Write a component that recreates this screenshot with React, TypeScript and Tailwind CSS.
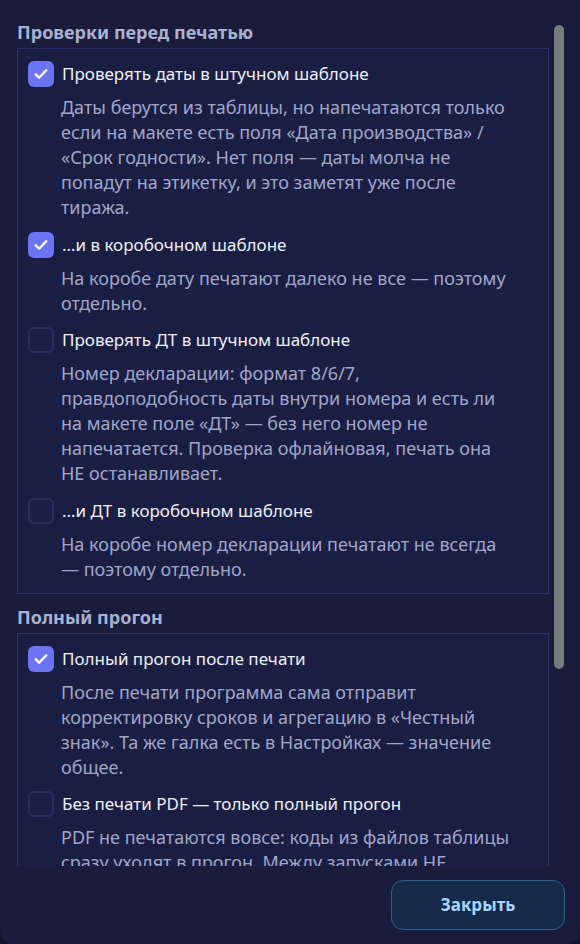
import React from "react";

type Item = { checked: boolean; label: string; lines: string[] };

const sections: { title: string; items: Item[] }[] = [
  {
    title: "Проверки перед печатью",
    items: [
      {
        checked: true,
        label: "Проверять даты в штучном шаблоне",
        lines: [
          "Даты берутся из таблицы, но напечатаются только",
          "если на макете есть поля «Дата производства» /",
          "«Срок годности». Нет поля — даты молча не",
          "попадут на этикетку, и это заметят уже после",
          "тиража.",
        ],
      },
      {
        checked: true,
        label: "…и в коробочном шаблоне",
        lines: ["На коробе дату печатают далеко не все — поэтому", "отдельно."],
      },
      {
        checked: false,
        label: "Проверять ДТ в штучном шаблоне",
        lines: [
          "Номер декларации: формат 8/6/7,",
          "правдоподобность даты внутри номера и есть ли",
          "на макете поле «ДТ» — без него номер не",
          "напечатается. Проверка офлайновая, печать она",
          "НЕ останавливает.",
        ],
      },
      {
        checked: false,
        label: "…и ДТ в коробочном шаблоне",
        lines: ["На коробе номер декларации печатают не всегда", "— поэтому отдельно."],
      },
    ],
  },
  {
    title: "Полный прогон",
    items: [
      {
        checked: true,
        label: "Полный прогон после печати",
        lines: [
          "После печати программа сама отправит",
          "корректировку сроков и агрегацию в «Честный",
          "знак». Та же галка есть в Настройках — значение",
          "общее.",
        ],
      },
      {
        checked: false,
        label: "Без печати PDF — только полный прогон",
        lines: [
          "PDF не печатаются вовсе: коды из файлов таблицы",
          "сразу уходят в прогон. Между запусками НЕ",
          "закрывайте программу.",
        ],
      },
    ],
  },
];

function Box({ checked }: { checked: boolean }) {
  if (checked) {
    return (
      <div className="w-[26px] h-[26px] shrink-0 rounded-[6px] bg-[#6d74f3] flex items-center justify-center">
        <svg width="18" height="18" viewBox="0 0 24 24" fill="none" stroke="#ffffff" strokeWidth="3.2" strokeLinecap="round" strokeLinejoin="round">
          <path d="M5 12.5l4.5 4.5L19 7" />
        </svg>
      </div>
    );
  }
  return <div className="w-[26px] h-[26px] shrink-0 rounded-[6px] border-2 border-[#2a2f60] bg-[#1c1f47]" />;
}

export default function App() {
  return (
    <div className="w-[580px] h-[944px] bg-[#13152e]" style={{ fontFamily: '"Noto Sans", "Open Sans", sans-serif' }}>
      <div className="w-full h-full bg-[#1a1c3c] rounded-b-[14px] flex flex-col">
        <div className="h-[866px] overflow-hidden flex">
          <div className="flex-1 pl-[17px] pt-[20px] flex flex-col">
            {sections.map((s, si) => (
              <div key={si} className={si > 0 ? "mt-[11px]" : ""}>
                <div className="text-[18px] leading-[24px] font-bold text-[#a9b1d0] whitespace-nowrap">{s.title}</div>
                <div className="mt-[4px] border border-[#2b3066] bg-[#1b1e43] pt-[12px] pb-[11px] pl-[10px] pr-[10px] flex flex-col gap-[11.5px]">
                  {s.items.map((it, ii) => (
                    <div key={ii} className="flex flex-col">
                      <div className="flex items-center gap-[8px]">
                        <Box checked={it.checked} />
                        <span className="text-[17px] leading-[24px] text-[#eef0f8] whitespace-nowrap">{it.label}</span>
                      </div>
                      <div className="mt-[8px] pl-[33px] text-[18px] leading-[25px] text-[#a0a6c9]">
                        {it.lines.map((l, li) => (
                          <div key={li} className="whitespace-nowrap">{l}</div>
                        ))}
                      </div>
                    </div>
                  ))}
                </div>
              </div>
            ))}
          </div>
          <div className="w-[10px] ml-[5px] mr-[16px] pt-[25px] shrink-0">
            <div className="h-[644px] w-full rounded-[5px] bg-[#7a7a7c]" />
          </div>
        </div>
        <div className="flex-1 flex justify-end items-start pt-[14px] pr-[15px]">
          <button className="w-[174px] h-[50px] rounded-[12px] border border-[#2f5f8c] bg-[#15294a] text-[#a8d5ff] text-[17px] font-bold">
            Закрыть
          </button>
        </div>
      </div>
    </div>
  );
}
